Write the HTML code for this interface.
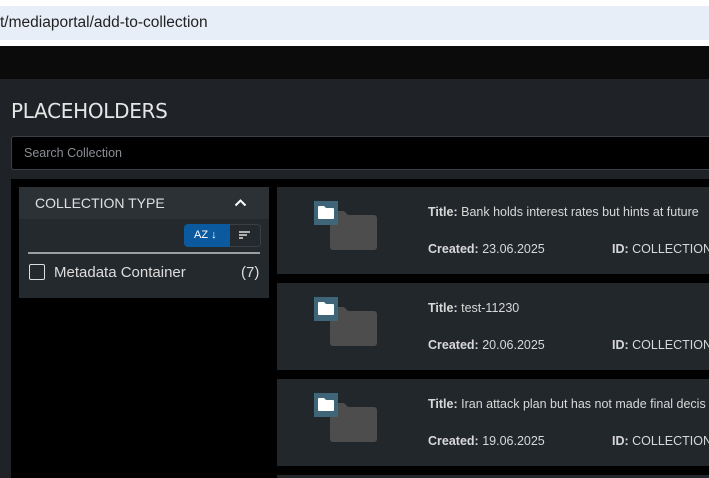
<!DOCTYPE html>
<html style="overflow:hidden"><head><style>
*{box-sizing:border-box;margin:0;padding:0}
html,body{width:709px;height:478px;overflow:hidden}
body{background:#fff;font-family:"Liberation Sans",sans-serif;position:relative}
.abs{position:absolute}
.url{left:0;top:6px;width:709px;height:34px;background:#e8eef8;font-size:15.5px;color:#222;padding:8px 0 0 0;font-family:"Liberation Sans",sans-serif}
.blk{left:0;top:46px;width:709px;height:33px;background:#0b0b0b}
.panel{left:0;top:79px;width:709px;height:399px;background:#1f2327}
h1{position:absolute;left:11px;top:99px;font-size:20px;font-weight:normal;color:#e6e6e6;font-family:"DejaVu Sans",sans-serif;letter-spacing:-0.3px}
.search{left:11px;top:136px;width:710px;height:34px;background:#000;border:1px solid #3a3f45;border-radius:3px;color:#8a8f94;font-size:12.5px;padding:9px 0 0 12px}
.area{left:11px;top:179px;width:698px;height:299px;background:#000}
.side{left:19px;top:187px;width:250px;height:111px;background:#24292e}
.sideh{left:19px;top:187px;width:250px;height:32px;background:#2c3136;color:#e0e0e0;font-size:14px;padding:8px 0 0 16px}
.card{left:277px;width:432px;height:87px;background:#22272c;overflow:hidden}
.t{position:absolute;left:151px;font-size:12.5px;color:#d8d8d8;white-space:nowrap}
.t b{font-weight:bold}
</style></head><body>
<div class="abs url">t/mediaportal/add-to-collection</div>
<div class="abs blk"></div>
<div class="abs panel"></div>
<h1>PLACEHOLDERS</h1>
<div class="abs search">Search Collection</div>
<div class="abs area"></div>
<div class="abs side"></div>
<div class="abs sideh">COLLECTION TYPE</div>
<svg class="abs" style="left:234px;top:198px" width="13" height="9"><path d="M1.5 7.5L6.5 2.5L11.5 7.5" stroke="#fff" stroke-width="2" fill="none"/></svg>
<div class="abs" style="left:184px;top:224px;width:46px;height:23px;background:#0b5aa0;border-radius:4px 0 0 4px;color:#fff;font-size:11px;padding:5px 0 0 10px">AZ ↓</div>
<div class="abs" style="left:230px;top:224px;width:31px;height:23px;border:1px solid #3a3f45;border-left:none;border-radius:0 4px 4px 0"></div>
<svg class="abs" style="left:238px;top:230px" width="14" height="10"><path d="M1 2H12M1 5H9M1 8H5" stroke="#ddd" stroke-width="1.5"/></svg>
<div class="abs" style="left:28px;top:252px;width:232px;height:2px;background:#9a9fa4"></div>
<div class="abs" style="left:29px;top:264px;width:16px;height:16px;border:1.5px solid #ddd;border-radius:2px"></div>
<div class="abs" style="left:54px;top:264px;font-size:15px;color:#ddd">Metadata Container</div>
<div class="abs" style="left:241px;top:264px;font-size:15px;color:#ddd">(7)</div>

<div class="abs card" style="top:187px">
<svg class="abs" style="left:37px;top:14px" width="64" height="50"><path d="M16 10h14l4 4h26a3 3 0 0 1 3 3v29a3 3 0 0 1-3 3H19a3 3 0 0 1-3-3z" fill="#4d4d4d"/><rect x="0" y="0" width="24" height="24" fill="#3e6678"/><path d="M4 6a1 1 0 0 1 1-1h5l2 2h7a1 1 0 0 1 1 1v9a1 1 0 0 1-1 1H5a1 1 0 0 1-1-1z" fill="#fff"/></svg>
<div class="t" style="top:18px"><b>Title:</b> Bank holds interest rates but hints at future</div>
<div class="t" style="top:55px"><b>Created:</b> 23.06.2025</div>
<div class="t" style="top:55px;left:335px"><b>ID:</b> COLLECTION-Y</div></div>
<div class="abs card" style="top:283px">
<svg class="abs" style="left:37px;top:14px" width="64" height="50"><path d="M16 10h14l4 4h26a3 3 0 0 1 3 3v29a3 3 0 0 1-3 3H19a3 3 0 0 1-3-3z" fill="#4d4d4d"/><rect x="0" y="0" width="24" height="24" fill="#3e6678"/><path d="M4 6a1 1 0 0 1 1-1h5l2 2h7a1 1 0 0 1 1 1v9a1 1 0 0 1-1 1H5a1 1 0 0 1-1-1z" fill="#fff"/></svg>
<div class="t" style="top:18px"><b>Title:</b> test-11230</div>
<div class="t" style="top:55px"><b>Created:</b> 20.06.2025</div>
<div class="t" style="top:55px;left:335px"><b>ID:</b> COLLECTION-Y</div></div>
<div class="abs card" style="top:379px">
<svg class="abs" style="left:37px;top:14px" width="64" height="50"><path d="M16 10h14l4 4h26a3 3 0 0 1 3 3v29a3 3 0 0 1-3 3H19a3 3 0 0 1-3-3z" fill="#4d4d4d"/><rect x="0" y="0" width="24" height="24" fill="#3e6678"/><path d="M4 6a1 1 0 0 1 1-1h5l2 2h7a1 1 0 0 1 1 1v9a1 1 0 0 1-1 1H5a1 1 0 0 1-1-1z" fill="#fff"/></svg>
<div class="t" style="top:18px"><b>Title:</b> Iran attack plan but has not made final decis</div>
<div class="t" style="top:55px"><b>Created:</b> 19.06.2025</div>
<div class="t" style="top:55px;left:335px"><b>ID:</b> COLLECTION-Y</div></div>
<div class="abs card" style="top:475px;height:3px"></div>
</body></html>
